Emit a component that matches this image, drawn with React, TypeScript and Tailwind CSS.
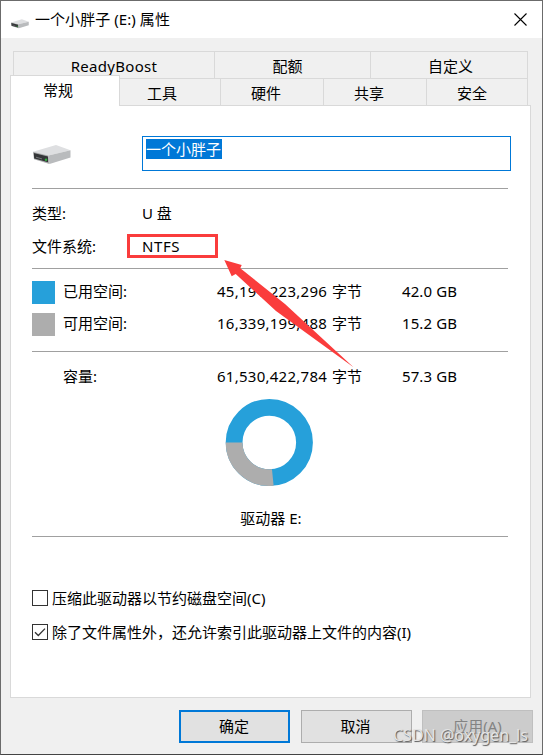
// ドライブのプロパティダイアログ（Windows 10 スタイル）

import type { ReactNode } from "react";

const topTabs = [
  { label: "ReadyBoost", width: "w-[201px] tracking-[0.3px]" },
  { label: "配额", width: "w-[156px] pr-[10px]" },
  { label: "自定义", width: "w-[157px] pl-[3px]" },
];

const bottomTabs = [
  { label: "工具", width: "w-[101px] pr-4" },
  { label: "硬件", width: "w-[103px] pr-3" },
  { label: "共享", width: "w-[103px] pr-3" },
  { label: "安全", width: "w-[101px] pr-[10px]" },
];

const spaces = [
  { label: "已用空间:", bytes: "45,191,223,296", size: "42.0 GB", color: "bg-[#26a0da]" },
  { label: "可用空间:", bytes: "16,339,199,488", size: "15.2 GB", color: "bg-[#adadad]" },
];

function DriveIcon({ className }: { className: string }) {
  return (
    <svg viewBox="0 0 38 20" className={className} aria-hidden="true">
      <path d="M0 6.8 23 0 37.5 5.3 15.5 10.6Z" fill="#dedfe1" />
      <path d="M15.5 10.6 37.5 5.3V12.6L16.5 18.9Z" fill="#b9bbbd" />
      <path d="M0 6.8 15.5 10.6 16.5 18.9 1 14.2Z" fill="#a9abac" />
      <path d="M.8 8 15 11.6V17.3L1.2 13.6Z" fill="#343638" />
      <path d="M3 12.2 9 13.9" stroke="#85888a" strokeWidth=".8" />
      <circle cx="13" cy="14.8" r="1.2" fill="#2fb53c" />
    </svg>
  );
}

function Divider({ className }: { className: string }) {
  return <div className={`h-px w-[476px] bg-[#a0a0a0] ${className}`} />;
}

function SpaceRow({ label, bytes, size, color }: { label: string; bytes: string; size: string; color?: string }) {
  return (
    <div className="flex h-8 items-center">
      <span className={`mr-2 size-[23px] ${color ?? ""}`} />
      <span className="-mt-px w-[154px]">{label}</span>
      <span className="-mt-px flex w-[185px]">
        <span className="w-[115px] tracking-[0.26px]">{bytes}</span>
        字节
      </span>
      <span className="-mt-px tracking-[0.1px]">{size}</span>
    </div>
  );
}

// 使用領域のドーナツグラフ
function UsageRing() {
  return (
    <svg width="90" height="90" viewBox="0 0 90 90" className="mt-1 ml-[192px]">
      <circle cx="45.3" cy="45.5" r="35.2" fill="none" stroke="#26a0da" strokeWidth="16.8" />
      <path d="M10.1 45.5A35.2 35.2 0 0 0 48.8 80.5" fill="none" stroke="#adadad" strokeWidth="16.8" />
    </svg>
  );
}

function CheckRow({ checked, children }: { checked?: boolean; children: ReactNode }) {
  return (
    <label className="flex h-[34px] items-center">
      <span className="mr-1 size-4 border border-[#333] bg-white">
        {checked && (
          <svg viewBox="0 0 14 14" className="size-[14px]" fill="none" stroke="#333" strokeWidth="1.3">
            <path d="M2 7.2 5.3 10.5 12 3.6" />
          </svg>
        )}
      </span>
      {children}
    </label>
  );
}

export default function App() {
  return (
    <div
      lang="zh-CN"
      className="relative flex h-[755px] w-[543px] flex-col overflow-hidden border border-[#6b6b6b] border-b-[#444] bg-[#f0f0f0] font-['Noto_Sans','Noto_Sans_CJK_SC',sans-serif] text-[15px] leading-none whitespace-nowrap text-black"
    >
      {/* タイトルバー */}
      <header className="flex h-[37px] shrink-0 items-center bg-white pr-[15px] pl-[10px]">
        <DriveIcon className="mt-2 mr-[6px] h-[10px] w-[18px]" />
        <h1 className="flex-1 tracking-[0.06px]">一个小胖子 (E:) 属性</h1>
        <svg width="13" height="13" viewBox="0 0 13 13" stroke="#000" strokeWidth="1.1">
          <path d="M.5.5 12.5 12.5M12.5.5.5 12.5" />
        </svg>
      </header>

      {/* タブ */}
      <nav className="mt-[13px] ml-[12px] flex h-[27px] w-[515px] shrink-0 border-t border-l border-[#d9d9d9]">
        {topTabs.map((tab) => (
          <div key={tab.label} className={`flex items-center justify-center border-r border-[#d9d9d9] pt-[2px] ${tab.width}`}>
            {tab.label}
          </div>
        ))}
      </nav>
      <nav className="z-10 -mt-[3px] ml-[9px] flex h-[31px] shrink-0 items-end">
        <div className="flex h-[31px] w-[110px] items-center justify-center border-x border-t border-[#d9d9d9] bg-white pr-[14px] pb-[2px]">
          常规
        </div>
        {bottomTabs.map((tab) => (
          <div
            key={tab.label}
            className={`mb-px flex h-[27px] items-center justify-center border-t border-r border-[#d9d9d9] pt-[2px] ${tab.width}`}
          >
            {tab.label}
          </div>
        ))}
      </nav>

      {/* 本体パネル */}
      <main className="-mt-px ml-[9px] h-[593px] w-[521px] shrink-0 border border-[#d9d9d9] bg-white pl-[21px]">
        <div className="mt-[30px] flex h-[35px]">
          <DriveIcon className="mt-[9px] mr-[71px] ml-px h-5 w-[38px]" />
          <div className="w-[369px] border border-[#0078d7] pt-[2px] pl-[3px]">
            <span className="flex h-5 w-[76px] items-center bg-[#0078d7] text-white">一个小胖子</span>
          </div>
        </div>
        <Divider className="mt-[17px]" />

        <div className="mt-2 flex h-[33px] items-center">
          <span className="w-[110px]">类型:</span>U 盘
        </div>
        <div className="flex h-[33px] items-center">
          <span className="w-[95px]">文件系统:</span>
          <span className="-mt-px flex h-[24px] w-[91px] items-center border-[3px] border-[#fa3c3c] pl-3 tracking-[0.6px]">
            NTFS
          </span>
        </div>
        <Divider className="mt-[5px] mb-[7px]" />

        {spaces.map((space) => (
          <SpaceRow key={space.label} {...space} />
        ))}
        <Divider className="mt-[11px] mb-[9px]" />

        <SpaceRow label="容量:" bytes="61,530,422,784" size="57.3 GB" />
        <UsageRing />
        <div className="mt-[15px] flex h-8 w-[478px] items-center justify-center">驱动器 E:</div>
        <Divider className="mt-[2px] mb-[44px]" />

        <CheckRow>压缩此驱动器以节约磁盘空间(C)</CheckRow>
        <CheckRow checked>除了文件属性外，还允许索引此驱动器上文件的内容(I)</CheckRow>
      </main>

      {/* ボタン */}
      <footer className="mt-3 ml-[178px] flex h-[33px] shrink-0">
        <button className="mr-[11px] w-[111px] border-2 border-[#0078d7] bg-[#e1e1e1] pr-px">确定</button>
        <button className="mr-[10px] w-[111px] border border-[#adadad] bg-[#e1e1e1] pr-[2px]">取消</button>
        <button className="w-[111px] border border-[#bfbfbf] bg-[#ccc] text-[#838383]">应用(A)</button>
      </footer>

      {/* NTFS を指す矢印 */}
      <svg className="pointer-events-none absolute top-[258px] left-[222px] z-20" width="132" height="110" viewBox="223 259 132 110">
        <path d="M224.3 260 241.7 265 240.3 268.3 285 304 353.5 367.3 276 311 235.7 274 231.7 276.3Z" fill="#fa3c3c" />
      </svg>

      {/* 透かし */}
      <span className="absolute top-[726px] left-[392px] z-20 text-[16px] text-[#e4e4e4] [text-shadow:1px_1px_1px_#555]">
        CSDN @oxygen_ls
      </span>
    </div>
  );
}
